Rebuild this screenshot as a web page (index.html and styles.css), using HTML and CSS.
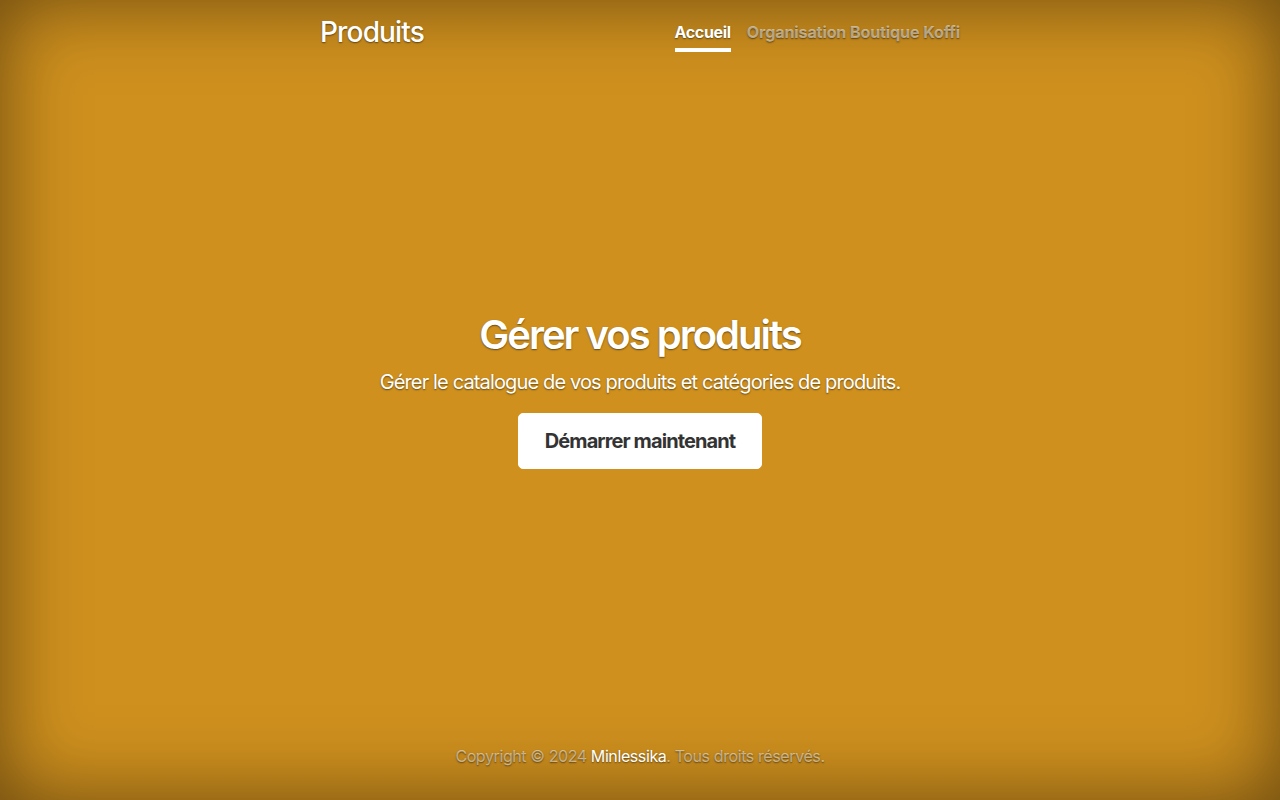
FILE: index.html
```html
<!DOCTYPE html>
<html lang="fr">
<head>
  <meta charset="UTF-8" />
  <title>Produits</title>
  <link rel="stylesheet" href="styles.css">
</head>
<body>
  <div class="cover-container">
    <header class="masthead">
      <h3 class="masthead-brand">Produits</h3>
      <nav class="nav-masthead">
        <a class="nav-link active" href="#">Accueil</a>
        <a class="nav-link" href="#">Organisation Boutique Koffi</a>
      </nav>
    </header>

    <main class="cover">
      <h1>Gérer vos produits</h1>
      <p class="lead">Gérer le catalogue de vos produits et catégories de produits.</p>
      <p class="lead">
        <a href="#" class="btn-start">Démarrer maintenant</a>
      </p>
    </main>

    <footer class="mastfoot">
      <p>Copyright © 2024 <a href="#">Minlessika</a>. Tous droits réservés.</p>
    </footer>
  </div>
</body>
</html>
```
FILE: styles.css
```css
html, body {
  height: 100%;
  margin: 0;
}
body {
  font-family: Inter, "Noto Sans", sans-serif;
  font-size: 16px;
  line-height: 1.5;
  color: #fff;
  text-align: center;
  background-color: #cf901e;
  text-shadow: 0 0.05rem 0.1rem rgba(0, 0, 0, 0.5);
  box-shadow: inset 0 0 5rem rgba(0, 0, 0, 0.5);
  display: flex;
}
a {
  color: #fff;
  text-decoration: none;
}
.cover-container {
  max-width: 42em;
  width: 100%;
  margin: 0 auto;
  padding: 1rem;
  display: flex;
  flex-direction: column;
  box-sizing: border-box;
}
.masthead {
  display: flex;
  justify-content: space-between;
  align-items: flex-start;
  margin-bottom: auto;
}
.masthead-brand {
  margin: 0;
  font-size: 1.75rem;
  font-weight: 500;
  line-height: 1.2;
  letter-spacing: -0.03em;
}
.nav-masthead {
  display: flex;
}
.nav-link {
  padding: 0.25rem 0;
  font-weight: 700;
  letter-spacing: -0.005em;
  color: rgba(255, 255, 255, 0.5);
  border-bottom: 0.25rem solid transparent;
}
.nav-link + .nav-link {
  margin-left: 1rem;
}
.nav-link.active {
  color: #fff;
  letter-spacing: -0.02em;
  border-bottom-color: #fff;
}
.cover {
  padding: 0 1rem;
}
.cover h1 {
  margin: 0 0 0.5rem;
  font-size: 2.5rem;
  font-weight: 600;
  line-height: 1.2;
  letter-spacing: -0.05em;
}
.lead {
  margin: 0 0 1rem;
  font-size: 1.25rem;
  font-weight: 400;
  letter-spacing: -0.043em;
}
.btn-start {
  display: inline-block;
  padding: 12px 26px;
  font-size: 1.25rem;
  font-weight: 700;
  line-height: 1.5;
  letter-spacing: -0.045em;
  color: #333;
  text-shadow: none;
  background: #fff;
  border: 1px solid #fff;
  border-radius: 5px;
  vertical-align: middle;
}
.mastfoot {
  margin-top: auto;
  color: rgba(255, 255, 255, 0.5);
  letter-spacing: -0.025em;
}
.mastfoot p {
  margin: 0 0 1rem;
}
```
